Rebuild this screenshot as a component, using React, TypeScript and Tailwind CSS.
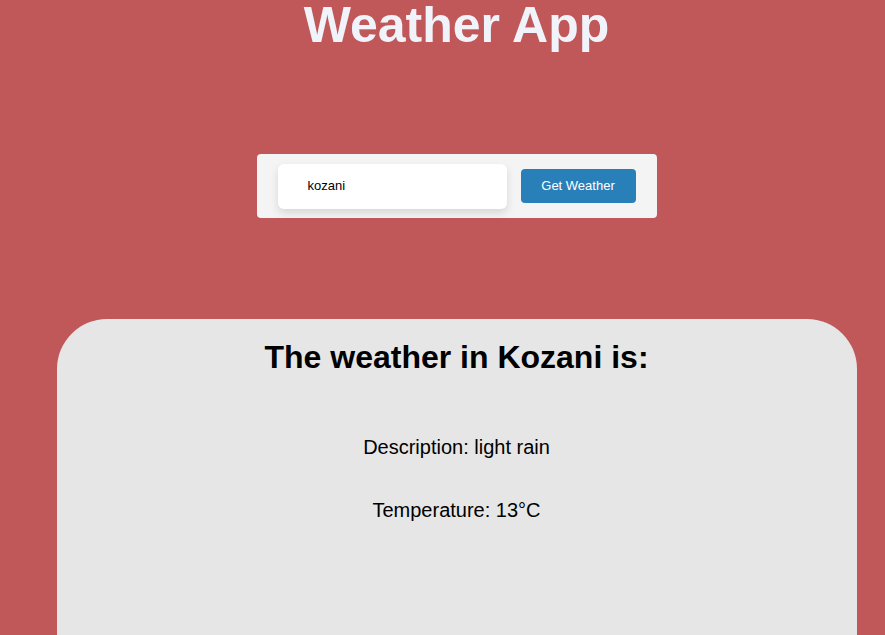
import React from "react";

export default function App() {
  return (
    <div
      className="w-[885px] h-[635px] overflow-hidden bg-[#c0585a] pl-[28px] flex flex-col items-center"
      style={{ fontFamily: '"Liberation Sans", Arial, sans-serif' }}
    >
      <h1 className="mt-[-3px] text-[50px] leading-[57px] font-bold text-[#f0f4fa]">Weather App</h1>
      <div className="mt-[100px] w-[400px] h-[64px] bg-[#f4f4f4] rounded-[4px] flex items-center pl-[21px]">
        <div className="w-[229px] h-[45px] bg-white rounded-[6px] shadow-[0_4px_8px_rgba(0,0,0,0.12)] flex items-center pl-[30px] text-[13px] text-black">
          kozani
        </div>
        <button className="ml-[14px] w-[115px] h-[34px] bg-[#2980b9] rounded-[4px] text-white text-[13px]">
          Get Weather
        </button>
      </div>
      <div className="mt-[101px] w-[800px] flex-1 bg-[#e6e6e6] rounded-t-[50px] flex flex-col items-center">
        <h2 className="mt-[20px] text-[32px] leading-[37px] font-bold text-black">The weather in Kozani is:</h2>
        <p className="mt-[60px] text-[20px] leading-[23px] text-black">Description: light rain</p>
        <p className="mt-[40px] text-[20px] leading-[23px] text-black">Temperature: 13°C</p>
      </div>
    </div>
  );
}
